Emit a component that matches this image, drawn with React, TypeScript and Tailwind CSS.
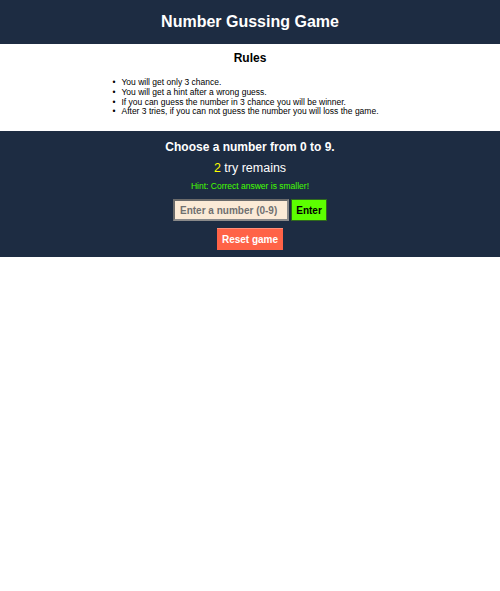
import React, { useState } from 'react';

const rules = [
  'You will get only 3 chance.',
  'You will get a hint after a wrong guess.',
  'If you can guess the number in 3 chance you will be winner.',
  'After 3 tries, if you can not guess the number you will loss the game.',
];

export default function App() {
  const [guess, setGuess] = useState('');

  return (
    <div className="w-full font-['Liberation_Sans',Arial,sans-serif]">
      {/* Title bar */}
      <header className="h-[44px] bg-[#1d2c42] flex items-center justify-center">
        <h1 className="text-[16px] font-bold text-white leading-none">Number Gussing Game</h1>
      </header>

      {/* Rules */}
      <section className="bg-white pt-[7px] pb-[14px] text-black">
        <h2 className="text-[12px] font-bold text-center leading-[14px]">Rules</h2>
        <div className="flex justify-center mt-[13px]">
          <ul className="text-left text-[8.5px] leading-[9.75px]">
            {rules.map((r) => (
              <li key={r} className="relative">
                <span className="absolute left-[-9px] top-0">•</span>
                {r}
              </li>
            ))}
          </ul>
        </div>
      </section>

      {/* Game panel */}
      <section className="bg-[#1d2c42] pt-[9px] pb-[7px] flex flex-col items-center text-white">
        <p className="text-[12px] font-bold leading-[14px]">Choose a number from 0 to 9.</p>
        <p className="mt-[7px] text-[12.5px] leading-[15px]">
          <span className="text-[#ffff00]">2</span> try remains
        </p>
        <p className="mt-[5px] text-[8.5px] leading-[10px] text-[#44ff00]">Hint: Correct answer is smaller!</p>
        <div className="mt-[8px] flex items-center gap-[2px]">
          <input
            value={guess}
            onChange={(e) => setGuess(e.target.value)}
            placeholder="Enter a number (0-9)"
            className="w-[116px] h-[22px] px-[5px] bg-[#fbead6] border-2 border-t-[#6b6b6b] border-l-[#6b6b6b] border-r-[#8a8a8a] border-b-[#8a8a8a] text-[10px] font-bold text-[#333] placeholder:text-[#707070] outline-none"
          />
          <button className="w-[36px] h-[22px] bg-[#5cff00] border border-[#2f6a1c] text-[10px] font-bold text-black">
            Enter
          </button>
        </div>
        <button className="mt-[7px] w-[66px] h-[22px] bg-[#ff6347] border-t border-[#ff8d77] text-[10px] font-bold text-white">
          Reset game
        </button>
      </section>
    </div>
  );
}
